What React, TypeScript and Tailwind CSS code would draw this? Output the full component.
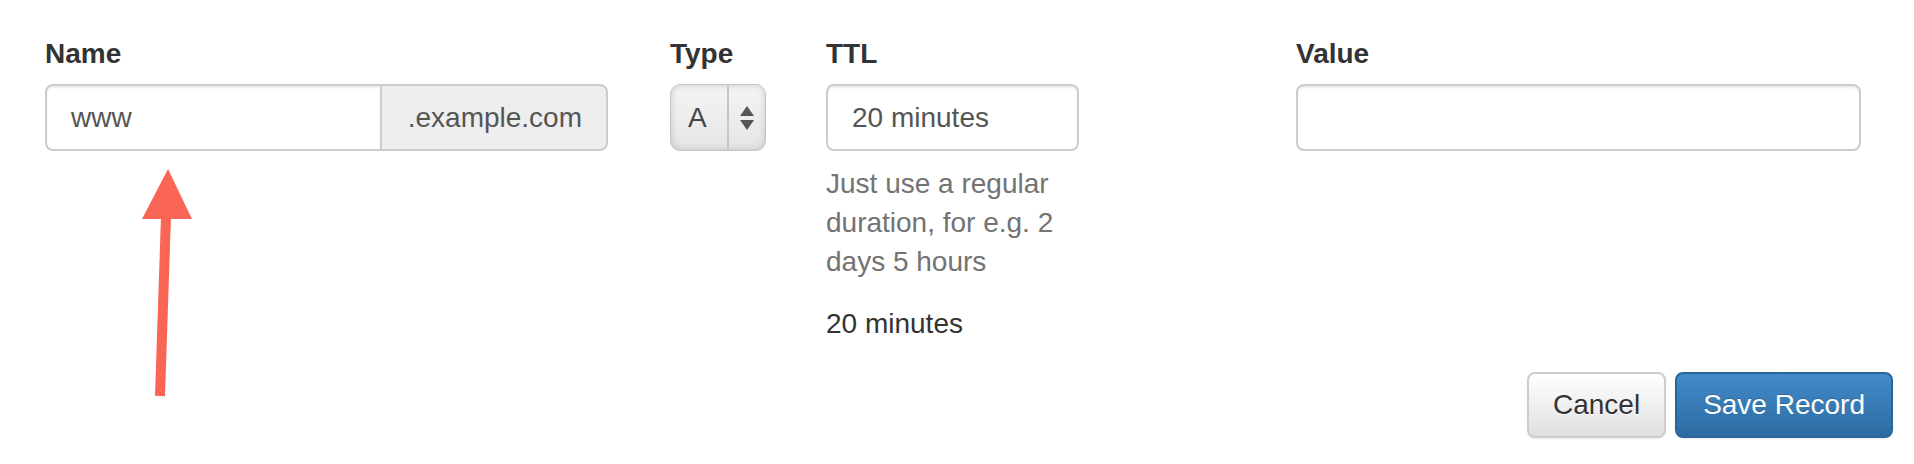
import React from "react";

function Label({ children }: { children: React.ReactNode }) {
  return (
    <label className="block text-[28px] leading-[40px] font-bold text-[#333] mb-[10px]">
      {children}
    </label>
  );
}

export default function App() {
  return (
    <div className="relative w-[1914px] h-[464px] bg-white font-['Liberation_Sans',Arial,sans-serif] text-[#333] overflow-hidden">
      <div className="flex items-start pt-[34px] pl-[45px]">
        {/* Name */}
        <div className="w-[563px]">
          <Label>Name</Label>
          <div className="flex h-[67px]">
            <div className="flex-1 flex items-center border-2 border-[#ccc] rounded-l-[8px] px-[24px] text-[28px] text-[#555] shadow-[inset_0_2px_2px_rgba(0,0,0,0.075)] bg-white">
              www
            </div>
            <div className="flex items-center border-2 border-l-0 border-[#ccc] rounded-r-[8px] bg-[#eee] pl-[26px] pr-[24px] text-[28px] text-[#555]">
              .example.com
            </div>
          </div>
        </div>

        {/* Type */}
        <div className="ml-[62px] w-[96px]">
          <Label>Type</Label>
          <div className="flex h-[67px] rounded-[10px] border border-[#c4c4c4] bg-gradient-to-b from-[#f4f4f4] via-[#ededed] to-[#e4e4e4] shadow-[inset_0_0_7px_rgba(0,0,0,0.16)] overflow-hidden">
            <div className="w-[56px] flex items-center pl-[17px] text-[28px] text-[#444]">A</div>
            <div className="w-[2px] bg-[#c6c6c6]" />
            <div className="flex-1 flex flex-col items-center justify-center gap-[4px]">
              <svg width="14" height="10" viewBox="0 0 14 10">
                <polygon points="7,0 14,10 0,10" fill="#555" />
              </svg>
              <svg width="14" height="10" viewBox="0 0 14 10">
                <polygon points="0,0 14,0 7,10" fill="#555" />
              </svg>
            </div>
          </div>
        </div>

        {/* TTL */}
        <div className="ml-[60px] w-[253px]">
          <Label>TTL</Label>
          <div className="flex items-center h-[67px] border-2 border-[#ccc] rounded-[8px] px-[24px] text-[28px] text-[#555] shadow-[inset_0_2px_2px_rgba(0,0,0,0.075)]">
            20 minutes
          </div>
          <p className="mt-[13px] mb-[23px] text-[28px] leading-[39px] text-[#737373]">
            Just use a regular duration, for e.g. 2 days 5 hours
          </p>
          <p className="text-[28px] leading-[40px] text-[#333]">20 minutes</p>
        </div>

        {/* Value */}
        <div className="ml-[217px] w-[565px]">
          <Label>Value</Label>
          <div className="h-[67px] border-2 border-[#ccc] rounded-[8px] shadow-[inset_0_2px_2px_rgba(0,0,0,0.075)]" />
        </div>
      </div>

      <div className="flex justify-end gap-[9px] pr-[21px] mt-[28px]">
        <button className="h-[66px] px-[24px] text-[28px] leading-[40px] text-[#333] rounded-[8px] border-2 border-[#ccc] bg-gradient-to-b from-white to-[#e0e0e0] [text-shadow:0_1px_0_#fff] shadow-[0_1px_2px_rgba(0,0,0,0.08)]">
          Cancel
        </button>
        <button className="h-[66px] px-[26px] text-[28px] leading-[40px] text-white rounded-[8px] border-2 border-[#2b669a] bg-gradient-to-b from-[#428bca] to-[#2d6ca2] [text-shadow:0_-1px_0_rgba(0,0,0,0.2)] shadow-[0_1px_2px_rgba(0,0,0,0.08)]">
          Save Record
        </button>
      </div>

      {/* annotation arrow */}
      <svg className="absolute left-0 top-0 pointer-events-none" width="300" height="464" viewBox="0 0 300 464">
        <line x1="166" y1="216" x2="160" y2="396" stroke="#f96655" strokeWidth="10" />
        <polygon points="168,169 142,219 192,219" fill="#f96655" />
      </svg>
    </div>
  );
}
